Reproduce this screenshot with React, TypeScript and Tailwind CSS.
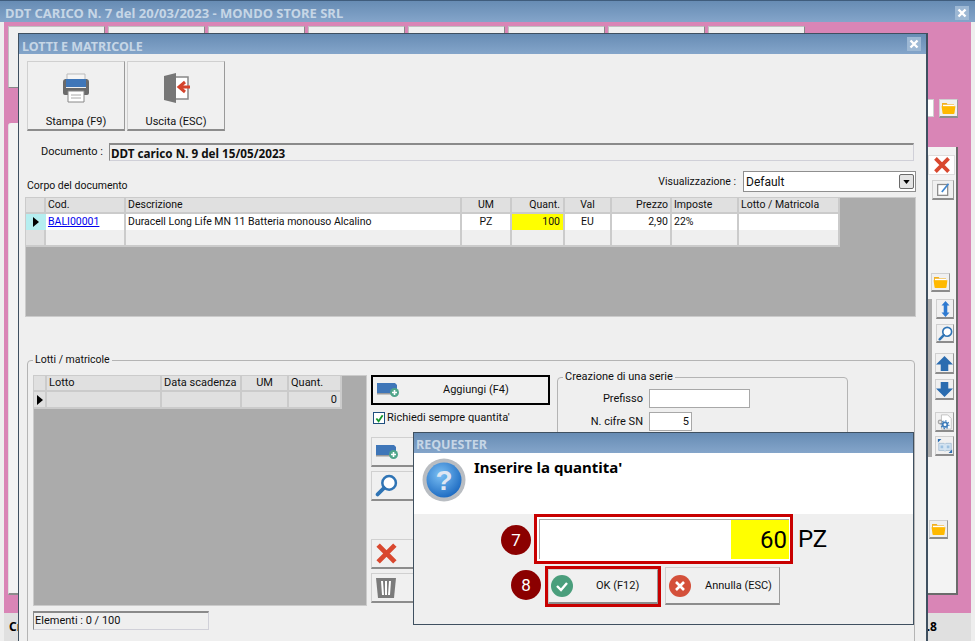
import type { ReactNode } from 'react';

const raised = 'border border-t-[#d0d0d0] border-l-[#d0d0d0] border-r-[#9a9a9a] border-b-[#8c8c8c] border-b-2 bg-[#f0f0f0]';
const cellHead = 'flex items-center whitespace-nowrap border-r-2 border-b-2 border-[#cbcbcb] bg-[#e0e0e0] px-[2px]';
const cellBody = 'flex items-center whitespace-nowrap border-r-2 border-[#cbcbcb] px-[2px]';
const titleBar = "flex items-center justify-between bg-gradient-to-b from-[#678cb4] to-[#84a5ca] font-['Noto_Sans',sans-serif] font-bold text-[#c6d6e6]";
const boldText = "font-['Noto_Sans',sans-serif] font-bold";

const tabs = [0, 1, 2, 3, 4, 5, 6, 7];

function CloseBox() {
  return (
    <span className="flex h-[14px] w-[14px] items-center justify-center bg-[#9db8d4]">
      <svg viewBox="0 0 10 10" className="h-[10px] w-[10px]" fill="none" stroke="#fff" strokeWidth="2.4">
        <path d="M1.5 1.5 8.5 8.5M8.5 1.5 1.5 8.5" />
      </svg>
    </span>
  );
}

function Folder({ className }: { className: string }) {
  return (
    <span className={`${raised} flex items-center justify-center ${className}`}>
      <svg viewBox="0 0 16 13" className="h-[12px] w-[15px]">
        <path d="M1 1h5l1 1.500h7v3H1z" fill="#f2b01e" />
        <path d="M2 3h12v2H2z" fill="#fff" />
        <path d="M.5 4.500h15l-1 7.500a1 1 0 0 1-1 1H2.500a1 1 0 0 1-1-1z" fill="#ffb900" />
      </svg>
    </span>
  );
}

function RedX({ className }: { className: string }) {
  return (
    <svg viewBox="0 0 22 22" className={className} fill="none" stroke="#d9482f" strokeWidth="4.600">
      <path d="M3 3 19 19M19 3 3 19" />
    </svg>
  );
}

function AddIcon() {
  return (
    <svg viewBox="0 0 24 16" className="h-[16px] w-[24px]">
      <path d="M1 1h18l2 2v8H1z" fill="#3f76b8" />
      <path d="M1 11h20v1.500H1z" fill="#9a9a9a" />
      <circle cx="18.500" cy="10.500" r="4.500" fill="#4fa58a" />
      <path d="M18.500 8v5M16 10.500h5" stroke="#fff" strokeWidth="1.600" />
    </svg>
  );
}

function Lens({ className }: { className: string }) {
  return (
    <svg viewBox="0 0 22 22" className={className} fill="none" stroke="#2f74b5">
      <circle cx="13.500" cy="8.500" r="6.500" strokeWidth="2.400" fill="#fff" />
      <path d="M8.500 13.500 2.500 19.500" strokeWidth="3.600" strokeLinecap="round" />
    </svg>
  );
}

function Arrow({ down }: { down?: boolean }) {
  return (
    <svg viewBox="0 0 18 18" className="h-[17px] w-[17px]">
      <path d={down ? 'M5 1h8v7h5l-9 9-9-9h5z' : 'M5 17h8v-7h5L9 1l-9 9h5z'} fill="#2a6cb0" />
    </svg>
  );
}

function SideBtn({ children, className }: { children: ReactNode; className: string }) {
  return <span className={`${raised} flex items-center justify-center ${className}`}>{children}</span>;
}

function BackWindow() {
  return (
    <div className="flex h-[641px] w-[975px] flex-col bg-[#eeeeee] px-[4px]">
      <div className={`${titleBar} -mx-[4px] h-[22px] border-t border-[#3f5c7c] pt-[2px] pr-[6px] pl-[5px] text-[13px]`}>
        <span>DDT CARICO N. 7 del 20/03/2023 - MONDO STORE SRL</span>
        <CloseBox />
      </div>
      <div className="flex flex-1 flex-col bg-[#d985b6] pt-[4px] pr-[13px] pl-[4px]">
        <div className="flex gap-[3px]">
          {tabs.map((t) => (
            <div key={t} className="h-[62px] w-[97px] border border-[#c0c0c0] border-r-[#888888] border-b-[#888888] bg-[#f0f0f0]" />
          ))}
        </div>
        <div className="mt-[11px] flex h-[18px] items-center justify-end gap-[5px]">
          <div className="h-[18px] w-[40px] border border-[#cfcfcf] bg-white" />
          <Folder className="h-[19px] w-[19px]" />
        </div>
        <div className="mt-[6px] flex h-[472px] items-start justify-between">
          <div className="h-[472px] w-[12px] rounded-tl-[3px] border-b-2 border-l border-[#8c8c8c] border-l-[#e0e0e0] bg-[#f3f3f3]" />
          <div className="mt-[24px] flex h-[448px] w-[31px] flex-col border-r-2 border-b-2 border-[#6b6b6b] bg-[#f3f3f3] pt-[8px]">
            <span className="ml-[1px] flex h-[20px] w-[27px] items-center justify-center border border-[#dedede] bg-white">
              <RedX className="h-[18px] w-[18px]" />
            </span>
            <SideBtn className="mt-[5px] ml-[5px] h-[20px] w-[22px]">
              <svg viewBox="0 0 18 18" className="h-[15px] w-[15px]" fill="none">
                <rect x="2" y="3" width="12" height="13" stroke="#8a8a8a" strokeWidth="1.500" fill="#fff" />
                <path d="M7 12 15 2" stroke="#3f86cf" strokeWidth="2" />
              </svg>
            </SideBtn>
            <Folder className="mt-[73px] ml-[4px] h-[19px] w-[19px]" />
            <div className="mt-[7px] flex items-start">
              <div className="h-[158px] w-[5px] bg-[#ababab]" />
              <div className="ml-[4px] flex flex-col">
                <SideBtn className="h-[20px] w-[18px]">
                  <svg viewBox="0 0 10 18" className="h-[16px] w-[9px]">
                    <path d="M5 0 9.500 5H7v8h2.500L5 18 .5 13H3V5H.5z" fill="#2e7ad1" />
                  </svg>
                </SideBtn>
                <SideBtn className="mt-[5px] h-[19px] w-[18px]">
                  <Lens className="h-[15px] w-[15px]" />
                </SideBtn>
                <SideBtn className="mt-[10px] -ml-px h-[21px] w-[19px]">
                  <Arrow />
                </SideBtn>
                <SideBtn className="mt-[5px] -ml-px h-[21px] w-[19px]">
                  <Arrow down />
                </SideBtn>
                <SideBtn className="mt-[12px] -ml-px h-[20px] w-[19px]">
                  <svg viewBox="0 0 18 18" className="h-[16px] w-[16px]" fill="none">
                    <path d="M5 1h7l4 4v12H5z" fill="#fff" stroke="#bdbdbd" />
                    <circle cx="3.500" cy="9" r="2" stroke="#a8a8a8" strokeWidth="1.500" />
                    <circle cx="9" cy="12" r="2.600" stroke="#3f7dbb" strokeWidth="2" />
                    <circle cx="9" cy="12" r="4.400" stroke="#3f7dbb" strokeWidth="1.400" strokeDasharray="1.600 1.800" />
                  </svg>
                </SideBtn>
                <SideBtn className="mt-[4px] -ml-px h-[20px] w-[19px]">
                  <svg viewBox="0 0 18 18" className="h-[16px] w-[16px]">
                    <path d="M2 6h6l1 1 1-1h6v8h-6l-1 1-1-1H2z" fill="#d4e4f2" stroke="#a9c0d4" />
                    <path d="M4 8.500h3v3H4zM11 8.500h3v3h-3z" fill="#9cc0e0" />
                    <path d="M1 1h4L1 5zM17 17h-4l4-4z" fill="#2a6cb0" />
                  </svg>
                </SideBtn>
              </div>
            </div>
            <Folder className="mt-[63px] ml-[2px] h-[19px] w-[19px]" />
          </div>
        </div>
      </div>
      <div className={`flex h-[28px] items-center justify-between bg-[#e0e0e0] pr-[6px] pl-[5px] text-[12px] text-black ${boldText}`}>
        <span>Cr</span>
        <span className="pr-[28px]">.8</span>
      </div>
    </div>
  );
}

function ToolButton({ label, children }: { label: string; children: ReactNode }) {
  return (
    <button className={`${raised} flex h-[70px] w-[98px] flex-col items-center justify-end`}>
      <span className="mb-[11px] flex h-[32px] items-center">{children}</span>
      <span>{label}</span>
    </button>
  );
}

function UpperGrid() {
  return (
    <div className="mt-[5px] ml-[6px] h-[120px] w-[891px] border border-[#cbcbcb] bg-[#ababab] text-[10.500px]">
      <div className="flex h-[16px] w-[814px]">
        <div className={`${cellHead} w-[20px]`} />
        <div className={`${cellHead} w-[80px]`}>Cod.</div>
        <div className={`${cellHead} w-[336px]`}>Descrizione</div>
        <div className={`${cellHead} w-[50px] justify-center`}>UM</div>
        <div className={`${cellHead} w-[53px] justify-end pr-[3px]`}>Quant.</div>
        <div className={`${cellHead} w-[47px] justify-center`}>Val</div>
        <div className={`${cellHead} w-[60px] justify-end`}>Prezzo</div>
        <div className={`${cellHead} w-[67px]`}>Imposte</div>
        <div className={`${cellHead} w-[101px]`}>Lotto / Matricola</div>
      </div>
      <div className="flex h-[16px] w-[814px] bg-white">
        <div className="flex w-[20px] items-center justify-center bg-[#b5eef0]">
          <svg viewBox="0 0 6 10" className="h-[10px] w-[6px]"><path d="M0 0 6 5 0 10z" fill="#000" /></svg>
        </div>
        <div className={`${cellBody} w-[80px] text-[#0000ee] underline`}>BALI00001</div>
        <div className={`${cellBody} w-[336px]`}>Duracell Long Life MN 11 Batteria monouso Alcalino</div>
        <div className={`${cellBody} w-[50px] justify-center`}>PZ</div>
        <div className={`${cellBody} w-[53px] justify-end bg-[#ffff00] pr-[3px]`}>100</div>
        <div className={`${cellBody} w-[47px] justify-center`}>EU</div>
        <div className={`${cellBody} w-[60px] justify-end`}>2,90</div>
        <div className={`${cellBody} w-[67px]`}>22%</div>
        <div className={`${cellBody} w-[101px]`} />
      </div>
      <div className="flex h-[17px] w-[814px] border-b-2 border-[#cbcbcb] bg-[#efefef]">
        <div className="w-[20px] border-r-2 border-[#cbcbcb] bg-[#e0e0e0]" />
        <div className="w-[80px] border-r-2 border-[#cbcbcb]" />
        <div className="w-[336px] border-r-2 border-[#cbcbcb]" />
        <div className="w-[50px] border-r-2 border-[#cbcbcb]" />
        <div className="w-[53px] border-r-2 border-[#cbcbcb]" />
        <div className="w-[47px] border-r-2 border-[#cbcbcb]" />
        <div className="w-[60px] border-r-2 border-[#cbcbcb]" />
        <div className="w-[67px] border-r-2 border-[#cbcbcb]" />
        <div className="w-[101px] border-r-2 border-[#cbcbcb]" />
      </div>
    </div>
  );
}

function ActionButton({ children, className }: { children: ReactNode; className: string }) {
  return <div className={`${raised} flex h-[30px] w-[179px] items-center pl-[3px] ${className}`}>{children}</div>;
}

function LottiGroup() {
  return (
    <fieldset className="mt-[36px] ml-[8px] h-[340px] w-[888px] rounded-[4px] border border-[#b4b4b4] pt-[8px] pl-[5px]">
      <legend className="px-[2px] text-[10.500px] leading-[14px]">Lotti / matricole</legend>
      <div className="flex items-start">
        <div>
          <div className="h-[231px] w-[334px] border border-[#cbcbcb] bg-[#ababab]">
            <div className="flex h-[16px]">
              <div className={`${cellHead} w-[13px]`} />
              <div className={`${cellHead} w-[115px]`}>Lotto</div>
              <div className={`${cellHead} w-[80px]`}>Data scadenza</div>
              <div className={`${cellHead} w-[47px] justify-center`}>UM</div>
              <div className={`${cellHead} w-[53px]`}>Quant.</div>
            </div>
            <div className="flex h-[17px] w-[308px] bg-[#e0e0e0]">
              <div className={`${cellHead} w-[13px] justify-center`}>
                <svg viewBox="0 0 6 10" className="h-[10px] w-[6px]"><path d="M0 0 6 5 0 10z" fill="#000" /></svg>
              </div>
              <div className={`${cellHead} w-[115px]`} />
              <div className={`${cellHead} w-[80px]`} />
              <div className={`${cellHead} w-[47px]`} />
              <div className={`${cellHead} w-[53px] justify-end pr-[3px]`}>0</div>
            </div>
          </div>
          <div className="mt-[5px] flex h-[19px] w-[176px] items-center border border-[#d0d0d8] border-t-2 border-t-[#8a8a8a] border-l-[#8a8a8a] pl-px">
            Elementi : 0 / 100
          </div>
        </div>
        <div className="ml-[4px] flex flex-col">
          <ActionButton className="!border-2 !border-black">
            <AddIcon />
            <span className="ml-[43px]">Aggiungi (F4)</span>
          </ActionButton>
          <label className="mt-[6px] ml-[2px] flex h-[14px] items-center gap-[2px]">
            <span className="flex h-[12px] w-[12px] items-center justify-center border border-[#1f4f7f] bg-white">
              <svg viewBox="0 0 10 10" className="h-[9px] w-[9px]" fill="none" stroke="#14972c" strokeWidth="2">
                <path d="M1.500 5 4 8 8.500 1.500" />
              </svg>
            </span>
            Richiedi sempre quantita'
          </label>
          <ActionButton className="mt-[12px]"><AddIcon /></ActionButton>
          <ActionButton className="mt-[4px]"><Lens className="h-[23px] w-[23px]" /></ActionButton>
          <ActionButton className="mt-[38px]"><RedX className="h-[23px] w-[23px]" /></ActionButton>
          <ActionButton className="mt-[4px]">
            <svg viewBox="0 0 22 22" className="h-[22px] w-[22px]">
              <path d="M1 1h20l-2 20H3z" fill="#7b7b7b" />
              <path d="M7 4l1 14M11 4v14M15 4l-1 14" stroke="#fff" strokeWidth="2" />
            </svg>
          </ActionButton>
        </div>
        <fieldset className="-mt-[5px] ml-[7px] h-[200px] w-[291px] rounded-[4px] border border-[#b4b4b4]">
          <legend className="ml-[5px] px-[2px] leading-[14px]">Creazione di una serie</legend>
          <div className="mt-[5px] flex items-center">
            <span className="w-[85px] text-right">Prefisso</span>
            <div className="ml-[6px] h-[19px] w-[101px] border border-[#a8a8a8] bg-white" />
          </div>
          <div className="mt-[4px] flex items-center">
            <span className="w-[85px] text-right">N. cifre SN</span>
            <div className="ml-[6px] flex h-[19px] w-[43px] items-center justify-end border border-[#a8a8a8] bg-white pr-[2px]">5</div>
          </div>
        </fieldset>
      </div>
    </fieldset>
  );
}

function MainDialog() {
  return (
    <div className="absolute top-[33px] left-[18px] h-[640px] w-[910px] border border-[#3f5060] border-r-2 bg-[#efefef]">
      <div className={`${titleBar} h-[20px] pr-[5px] pl-[3px] text-[12.500px]`}>
        <span className="pt-[5px]">LOTTI E MATRICOLE</span>
        <CloseBox />
      </div>
      <div className="mt-[7px] ml-[8px] flex gap-[2px]">
        <ToolButton label="Stampa (F9)">
          <svg viewBox="0 0 32 30" className="h-[30px] w-[32px]">
            <path d="M7 1h18v8H7z" fill="#f5f5f5" stroke="#bbb" />
            <path d="M5 6h22v8H5z" fill="#3f76b8" />
            <path d="M3 9a3 3 0 0 1 3-3v9h20V6a3 3 0 0 1 3 3v11a2 2 0 0 1-2 2H5a2 2 0 0 1-2-2z" fill="#6a6a6a" />
            <path d="M8 18h16v11H8z" fill="#fff" stroke="#888" />
            <path d="M11 22h10M11 25h10" stroke="#aaa" />
          </svg>
        </ToolButton>
        <ToolButton label="Uscita (ESC)">
          <svg viewBox="0 0 30 32" className="h-[32px] w-[30px]">
            <path d="M3 4 15 1v30L3 28z" fill="#777" />
            <path d="M15 5h12v22H15" fill="#fff" stroke="#888" strokeWidth="1.500" />
            <path d="M29 15H20M24 10l-6 5 6 5" fill="none" stroke="#d4432c" strokeWidth="3" />
          </svg>
        </ToolButton>
      </div>
      <div className="mt-[12px] flex items-center">
        <span className="w-[84px] text-right">Documento :</span>
        <div className={`ml-[6px] flex h-[18px] w-[805px] items-center border border-[#d0d0d8] border-t-2 border-t-[#8a8a8a] border-l-[#8a8a8a] pl-px text-[11.700px] ${boldText}`}>
          DDT carico N. 9 del 15/05/2023
        </div>
      </div>
      <div className="mt-[10px] ml-[8px] flex h-[21px] w-[889px] items-end justify-between text-[10.500px]">
        <span className="-mb-[1px]">Corpo del documento</span>
        <div className="flex items-center gap-[7px]">
          <span>Visualizzazione :</span>
          <div className="flex h-[21px] w-[173px] items-center justify-between border border-[#8f8f8f] bg-white pr-px pl-[2px] text-[12px]">
            Default
            <span className="flex h-[15px] w-[15px] items-center justify-center rounded-[2px] border border-[#6a6a6a] bg-[#e4e4e4]">
              <svg viewBox="0 0 8 5" className="h-[4px] w-[7px]"><path d="M0 0h8L4 5z" fill="#000" /></svg>
            </span>
          </div>
        </div>
      </div>
      <UpperGrid />
      <LottiGroup />
    </div>
  );
}

function Requester() {
  return (
    <div className="absolute top-[432px] left-[413px] h-[193px] w-[501px] border border-[#3f5060] bg-[#efefef]">
      <div className={`${titleBar} h-[20px] pt-[3px] pl-[2px] text-[12.500px]`}>REQUESTER</div>
      <div className="flex h-[61px] items-start bg-white pt-[5px] pl-[8px]">
        <svg viewBox="0 0 44 44" className="h-[44px] w-[44px]">
          <defs>
            <radialGradient id="qb" cx="0.400" cy="0.350" r="0.700">
              <stop offset="0" stopColor="#7cc0f4" />
              <stop offset="1" stopColor="#1a68c0" />
            </radialGradient>
          </defs>
          <circle cx="22" cy="22" r="21.500" fill="#b9bdc2" />
          <circle cx="22" cy="22" r="17.500" fill="url(#qb)" />
          <text x="22" y="32" textAnchor="middle" fontSize="28" fontWeight="700" fill="#dfe6f2" fontFamily="Liberation Sans, sans-serif">?</text>
        </svg>
        <span className={`ml-[8px] text-[15px] leading-[18px] text-black ${boldText}`}>Inserire la quantita'</span>
      </div>
      <div className="mt-[-1px] flex pt-[1px]">
        <div className="ml-[87px] flex h-[30px] w-[30px] translate-y-[11px] items-center justify-center rounded-full bg-[#8b0000] text-[17px] text-white">7</div>
        <div className="ml-[3px] h-[50px] w-[259px] border-[3px] border-[#c80000] bg-white py-[2px] pr-px pl-[2px]">
          <div className="flex h-full justify-end border-t border-l border-[#a8a8a8]">
            <span className="flex w-[58px] items-center justify-end bg-[#ffff00] pr-[2px] text-[24px] text-black">60</span>
          </div>
        </div>
        <span className="ml-[5px] flex items-center text-[24px] text-black">PZ</span>
      </div>
      <div className="mt-[2px] flex items-start">
        <div className="mt-[4px] ml-[97px] flex h-[30px] w-[30px] items-center justify-center rounded-full bg-[#8b0000] text-[17px] text-white">8</div>
        <div className="ml-[4px] h-[41px] w-[116px] border-[3px] border-[#c80000]">
          <div className={`${raised} flex h-full items-center pl-[2px]`}>
            <svg viewBox="0 0 22 22" className="h-[22px] w-[22px]">
              <circle cx="11" cy="11" r="11" fill="#4a9e7c" />
              <path d="M6 11l4 4 6-7" fill="none" stroke="#fff" strokeWidth="2.400" />
            </svg>
            <span className="ml-[23px]">OK (F12)</span>
          </div>
        </div>
        <div className={`${raised} mt-[1px] ml-[4px] flex h-[38px] w-[115px] items-center pl-[3px]`}>
          <svg viewBox="0 0 22 22" className="h-[22px] w-[22px]">
            <circle cx="11" cy="11" r="11" fill="#d4503a" />
            <path d="M7 7l8 8M15 7l-8 8" stroke="#fff" strokeWidth="2.600" />
          </svg>
          <span className="ml-[14px]">Annulla (ESC)</span>
        </div>
      </div>
    </div>
  );
}

export default function App() {
  return (
    <div className="relative h-[641px] w-[975px] overflow-hidden font-['Roboto',sans-serif] text-[11px] leading-[14px] text-[#101010]">
      <BackWindow />
      <MainDialog />
      <Requester />
    </div>
  );
}
